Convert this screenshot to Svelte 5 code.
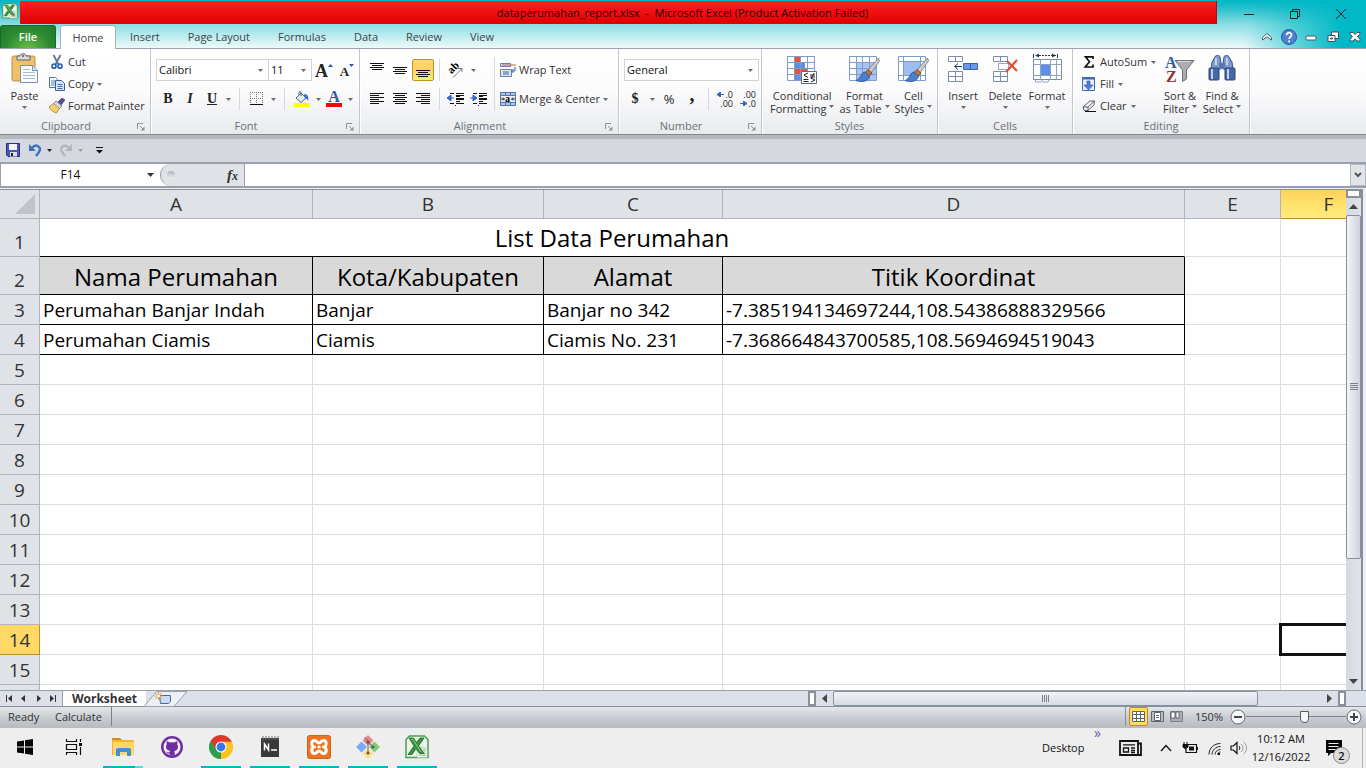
<script>
  const tabs = ['Insert', 'Page Layout', 'Formulas', 'Data', 'Review', 'View'];
  const columns = [
    { id: 'A', width: 273 },
    { id: 'B', width: 231 },
    { id: 'C', width: 179 },
    { id: 'D', width: 462 },
    { id: 'E', width: 96 },
    { id: 'F', width: 96 }
  ];
  const headings = ['Nama Perumahan', 'Kota/Kabupaten', 'Alamat', 'Titik Koordinat'];
  const records = [
    ['Perumahan Banjar Indah', 'Banjar', 'Banjar no 342', '-7.385194134697244,108.54386888329566'],
    ['Perumahan Ciamis', 'Ciamis', 'Ciamis No. 231', '-7.368664843700585,108.5694694519043']
  ];
  const emptyRows = [5, 6, 7, 8, 9, 10, 11, 12, 13, 14, 15, ''];
  let zoom = $state(59);
</script>

{#snippet arrow(color = '#6b6b6b')}
  <svg class="arrow" width="5" height="3" viewBox="0 0 5 3"><path d="M0 0h5L2.5 3z" fill={color} /></svg>
{/snippet}

{#snippet launcher(label)}
  <button class="launcher" aria-label={label}>
    <svg width="8" height="8" viewBox="0 0 8 8"><path d="M.5 6V.5H6M3 3l3 3" stroke="#8d939c" fill="none" /><path d="M7.5 3.5v4h-4z" fill="#8d939c" /></svg>
  </button>
{/snippet}

{#snippet lines(list)}
  <svg width="16" height="16" viewBox="0 0 16 16">
    {#each list as [x, y, w]}<rect {x} {y} width={w} height="1" fill="#111" />{/each}
  </svg>
{/snippet}

{#snippet brush()}
  <path d="M30.500 5L20 17l3 3 8.500-12z" fill="#c9ccd1" stroke="#777" stroke-width=".8" />
  <path d="M20 16.500l-3 3 4 4 3-3.500z" fill="#b5763f" stroke="#6b4020" stroke-width=".8" />
  <path d="M17 19c-4 0-4 7-9 8.500 5 2 12 1.500 13.500-4z" fill="#4a7fd0" stroke="#2c4f95" stroke-width=".8" />
{/snippet}

{#snippet excel(size)}
  <svg width={size} height={size} viewBox="0 0 24 24">
    <path d="M4.500 1h15l3.500 3.500V22.500H1V4.500z" fill="#e9f4e6" stroke="#4f9a5b" stroke-width="1.500" />
    <path d="M12 11l10 3v8.500H12z" fill="#fff" stroke="#a7cda6" stroke-width=".8" />
    <path d="M13 14l8 2M13 17l8 1.500M13 20l8 .500M16 12v9M19 13v9" stroke="#82b886" stroke-width=".8" />
    <path d="M4 3h4.500l3 4.500L15 3h4l-5.500 8 5.500 7.500h-4.500L11 13.500 7 19.500H3L9 11z" fill="#38923f" stroke="#1c6a2b" stroke-width=".8" />
    <path d="M6 4.500h2L16 17" stroke="#8fd07e" fill="none" />
  </svg>
{/snippet}

<div class="window">
  <header class="top">
    <div class="titlebar">
      <span class="appicon">{@render excel(16)}</span>
      <div class="title">dataperumahan_report.xlsx&nbsp; -&nbsp; Microsoft Excel (Product Activation Failed)</div>
      <div class="winctl">
        <button aria-label="Minimize"><svg width="12" height="12"><path d="M1 6.500h10" stroke="#222" /></svg></button>
        <button aria-label="Restore"><svg width="12" height="12"><path d="M1.500 3.500h7v7h-7zM3.500 3.500v-2h7v7h-2" stroke="#222" fill="none" /></svg></button>
        <button aria-label="Close"><svg width="12" height="12"><path d="M1 1l10 10M11 1L1 11" stroke="#222" /></svg></button>
      </div>
    </div>
    <nav class="tabs">
      <button class="file">File</button>
      <button class="home">Home</button>
      {#each tabs as tab}<button class="tab">{tab}</button>{/each}
      <div class="docctl">
        <button aria-label="Collapse ribbon"><svg width="12" height="12"><path d="M6 2.500L1.500 6.500V9L6 5.800 10.500 9V6.500z" fill="#fff" stroke="#4a5a62" /></svg></button>
        <button aria-label="Help"><svg width="16" height="16" viewBox="0 0 16 16"><circle cx="8" cy="8" r="7.500" fill="#4f80d2" stroke="#2a559f" /><path d="M5.500 6.200C5.500 2.800 10.600 3 10.500 6c0 1.700-2.400 2-2.400 4M8.100 11.500v1.700" stroke="#fff" stroke-width="1.700" fill="none" /></svg></button>
        <button aria-label="Minimize document"><svg width="12" height="12"><rect x="1" y="5" width="10" height="4" rx="1" fill="#fff" stroke="#4a5a62" /></svg></button>
        <button aria-label="Restore document"><svg width="12" height="12"><path d="M4.500 1h7v6.500h-7z" fill="#fff" stroke="#40525a" /><path d="M1 4.500h7v6H1z" fill="#fff" stroke="#40525a" /><path d="M3.500 7h2v1h-2z" fill="none" stroke="#40525a" /></svg></button>
        <button aria-label="Close document"><svg width="12" height="12"><path d="M1 1.500h3l2 2 2-2h3v1.500L8.500 5.500 11 8.500V10H8L6 8l-2 2H1V8.500l2.500-3L1 3z" fill="#fff" stroke="#40525a" /></svg></button>
      </div>
    </nav>
  </header>

  <section class="ribbon">
    <div class="group clip">
      <div class="body">
        <button class="big">
          <svg width="30" height="32" viewBox="0 0 30 32">
            <rect x="2" y="3" width="23" height="25" rx="2" fill="#efbf6b" stroke="#c08f42" />
            <path d="M7 3h3c0-3 6-3 6 0h4v4H7z" fill="#d8dbdf" stroke="#5f6670" /><circle cx="13" cy="3" r="1" fill="#555" />
            <path d="M10.500 12.500h12l5 5v12h-17z" fill="#fafcff" stroke="#7b8fae" /><path d="M22.500 12.500v5h5" fill="#dce5f2" stroke="#7b8fae" />
            <path d="M13 16.500h7M13 19.500h12M13 22.500h12M13 25.500h12" stroke="#a9b9d3" />
          </svg>
          <span>Paste</span>{@render arrow()}
        </button>
        <div class="stack">
          <button class="row"><svg width="16" height="16" viewBox="0 0 16 16"><path d="M4.500 1l4.800 9M11.500 1L6.700 10" stroke="#66768e" stroke-width="1.800" /><circle cx="5" cy="12.200" r="2" fill="none" stroke="#3162b4" stroke-width="1.700" /><circle cx="11" cy="12.200" r="2" fill="none" stroke="#3162b4" stroke-width="1.700" /></svg>Cut</button>
          <button class="row"><svg width="16" height="16" viewBox="0 0 16 16"><path d="M.5 1.500h6l2 2v8h-8z" fill="#f5f9ff" stroke="#54729f" /><path d="M2 5h5M2 7h5M2 9h5" stroke="#5f86c4" /><path d="M6.500 4.500h6l3 3v7h-9z" fill="#dbe8fa" stroke="#3a5f9e" /><path d="M8.500 8.500h5M8.500 10.500h5M8.500 12.500h5" stroke="#3f6cb8" /></svg>Copy {@render arrow()}</button>
          <button class="row"><svg width="16" height="16" viewBox="0 0 16 16"><path d="M13 0l3 2-4 5-3-3z" fill="#5a4a9a" stroke="#3a3070" stroke-width=".6" /><path d="M7 3l6 5-3 3-6-5z" fill="#d5d9df" stroke="#6c727b" stroke-width=".8" /><path d="M4.500 5.500l6 5-3 4.500c-3-.5-6-3-7.500-6z" fill="#f2cf70" stroke="#a5803a" stroke-width=".8" /></svg>Format Painter</button>
        </div>
      </div>
      <div class="label">Clipboard{@render launcher('Clipboard options')}</div>
    </div>

    <div class="group font">
      <div class="body cols">
        <div class="tools top-tools">
          <div class="combo name"><select aria-label="Font"><option>Calibri</option></select>{@render arrow()}</div>
          <div class="combo size"><select aria-label="Font size"><option>11</option></select>{@render arrow()}</div>
          <button class="ib grow" aria-label="Grow font"><b>A</b><svg width="5" height="3"><path d="M0 3h5L2.500 0z" fill="#2c55a8" /></svg></button>
          <button class="ib shrink" aria-label="Shrink font"><b>A</b><svg width="5" height="3"><path d="M0 0h5L2.500 3z" fill="#2c55a8" /></svg></button>
        </div>
        <div class="tools">
          <button class="ib serif" aria-label="Bold"><b>B</b></button>
          <button class="ib serif" aria-label="Italic"><b><i>I</i></b></button>
          <button class="ib serif" aria-label="Underline"><b><u>U</u></b></button>
          <button class="drop" aria-label="Underline styles">{@render arrow()}</button>
          <span class="sep wide"></span>
          <button class="ib" aria-label="Borders"><svg width="14" height="14"><path d="M.5 0v12M6.500 0v12M12.500 0v12M0 .5h13M0 6.500h13" stroke="#777" stroke-dasharray="1 1" /><path d="M0 12.500h13" stroke="#111" /></svg></button>
          <button class="drop" aria-label="Border styles">{@render arrow()}</button>
          <span class="sep wide"></span>
          <button class="ib" aria-label="Fill color"><svg width="16" height="16"><path d="M2 7l5-5 5 5-5 4.500z" fill="#dfe9f7" stroke="#4c6489" /><path d="M7 5V1.500C7 0 5 0 5 1.500V4" stroke="#4c6489" fill="none" /><path d="M10 3c4 0 5 3 4 7-1-2-2-3-4-4z" fill="#3f73c7" /><rect y="12" width="16" height="4" fill="#ff0" /></svg></button>
          <button class="drop" aria-label="Fill palette">{@render arrow()}</button>
          <button class="ib colorbtn" aria-label="Font color"><b>A</b></button>
          <button class="drop" aria-label="Font palette">{@render arrow()}</button>
        </div>
      </div>
      <div class="label">Font{@render launcher('Font options')}</div>
    </div>

    <div class="group align">
      <div class="body">
        <div class="cols">
          <div class="tools g1 top-tools">
            <button class="ib" aria-label="Top align">{@render lines([[1, 1, 14], [3, 3, 10], [1, 5, 14], [3, 7, 10]])}</button>
            <button class="ib" aria-label="Middle align">{@render lines([[1, 5, 14], [3, 7, 10], [1, 9, 14], [3, 11, 10]])}</button>
            <button class="ib on" aria-label="Bottom align">{@render lines([[1, 8, 14], [3, 10, 10], [1, 12, 14], [3, 14, 10]])}</button>
            <span class="sep"></span>
            <button class="ib" aria-label="Orientation"><svg class="open" width="16" height="16"><text x="1" y="10" transform="rotate(-45 5 8)" class="svgab">ab</text><path d="M5 15.500l9-9M10 6.500h4V10" stroke="#777" fill="none" /></svg></button>
            <button class="drop" aria-label="Orientation menu">{@render arrow()}</button>
          </div>
          <div class="tools g1">
            <button class="ib" aria-label="Align left">{@render lines([[1, 2, 14], [1, 4, 9], [1, 6, 14], [1, 8, 9], [1, 10, 14], [1, 12, 9]])}</button>
            <button class="ib" aria-label="Center">{@render lines([[1, 2, 14], [3, 4, 10], [1, 6, 14], [3, 8, 10], [1, 10, 14], [3, 12, 10]])}</button>
            <button class="ib" aria-label="Align right">{@render lines([[1, 2, 14], [6, 4, 9], [1, 6, 14], [6, 8, 9], [1, 10, 14], [6, 12, 9]])}</button>
            <span class="sep"></span>
            <button class="ib" aria-label="Decrease indent">{@render lines([[2, 2, 4], [8, 2, 8], [8, 4, 8], [8, 5, 4], [8, 7, 8], [8, 8, 8], [8, 10, 4], [2, 12, 4], [8, 12, 8], [7, 14, 1]])}<svg class="over" width="8" height="6"><path d="M0 3l4-3v6zM3 3h4" fill="#3565c0" stroke="#3565c0" /></svg></button>
            <button class="ib" aria-label="Increase indent">{@render lines([[2, 2, 4], [8, 2, 8], [8, 4, 8], [8, 5, 4], [8, 7, 8], [8, 8, 8], [8, 10, 4], [2, 12, 4], [8, 12, 8], [7, 14, 1]])}<svg class="over" width="8" height="6"><path d="M7 3L3 0v6zM0 3h4" fill="#3565c0" stroke="#3565c0" /></svg></button>
          </div>
        </div>
        <span class="sep tall"></span>
        <div class="cols">
          <button class="row tool-row top-tools"><svg width="16" height="16"><path d="M.5 1.500h10v3H.5zM.5 7.500h11v7H.5z" fill="#dce8f8" stroke="#6580ab" /><path d="M2 3h14" stroke="#b06a28" /><path d="M3 10h6M3 12h6" stroke="#3e5f98" /><path d="M15 5v4h-3M13.500 7l-2 2 2 2" stroke="#2f5cab" fill="none" /></svg>Wrap Text</button>
          <button class="row tool-row"><svg width="16" height="16"><path d="M.5 1.500h15v13H.5zM.5 4.500h15M.5 11.500h15M5.500 1v3M10.500 1v3M5.500 12v3M10.500 12v3" fill="#a9c5ed" stroke="#5776a9" /><path d="M1 5h14v6H1z" fill="#eef4fc" /><path d="M1 8h3M12 8h3M3 6.500L4.500 8 3 9.500M13 6.500L11.500 8 13 9.500" stroke="#222" fill="none" /><text x="5" y="11" class="svga">a</text></svg>Merge &amp; Center {@render arrow()}</button>
        </div>
      </div>
      <div class="label">Alignment{@render launcher('Alignment options')}</div>
    </div>

    <div class="group number">
      <div class="body cols">
        <div class="combo format top-tools"><select aria-label="Number format"><option>General</option></select>{@render arrow()}</div>
        <div class="tools g1">
          <button class="ib serif" aria-label="Currency"><b>$</b></button>
          <button class="drop" aria-label="Currency menu">{@render arrow()}</button>
          <button class="ib pct" aria-label="Percent">%</button>
          <button class="ib comma" aria-label="Comma style">,</button>
          <span class="sep"></span>
          <button class="ib dec" aria-label="Increase decimal"><span><svg width="8" height="5"><path d="M0 2.500L3.500 0v5zM3 2.500h4" fill="#3565c0" stroke="#3565c0" /></svg>.0</span><span>.00</span></button>
          <button class="ib dec" aria-label="Decrease decimal"><span>.00</span><span><svg width="8" height="5"><path d="M7 2.500L3.500 0v5zM0 2.500h4" fill="#3565c0" stroke="#3565c0" /></svg>.0</span></button>
        </div>
      </div>
      <div class="label">Number{@render launcher('Number options')}</div>
    </div>

    <div class="group styles">
      <div class="body">
        <button class="big">
          <svg width="32" height="32" viewBox="0 0 32 32">
            <path d="M1.500 3.500h27v24h-27z" fill="#fff" /><path d="M8 3h6v19H8z" fill="#e8503a" /><path d="M8 9h11v6H8z" fill="#5d8fe6" /><path d="M8 15h13v6H8z" fill="#e8503a" /><path d="M8 21h6v7H8z" fill="#5d8fe6" />
            <path d="M1.500 3.500h27v24h-27zM1 9.500h28M1 15.500h28M1 21.500h28M8.500 3v25M14.500 3v25M21.500 3v25" fill="none" stroke="#7f9bc8" />
            <path d="M15.500 18.500h15v12h-15z" fill="#fff" stroke="#566c90" /><path d="M22 20l-4 2 4 2.500M17.500 26.500h5M17.500 28.500h5M24 22h5M24 24h5M28 20l-3 6M25 25l4 2-4 2" stroke="#222" fill="none" />
          </svg>
          <span>Conditional</span><span>Formatting {@render arrow()}</span>
        </button>
        <button class="big">
          <svg width="32" height="32" viewBox="0 0 32 32"><path d="M1.500 3.500h27v24h-27z" fill="#fff" /><path d="M8 9h20v18H8z" fill="#a8c4f0" /><path d="M1.500 3.500h27v24h-27zM1 9.500h28M1 15.500h28M1 21.500h28M8.500 3v25M14.500 3v25M21.500 3v25" fill="none" stroke="#7f9bc8" />{@render brush()}</svg>
          <span>Format</span><span>as Table {@render arrow()}</span>
        </button>
        <button class="big">
          <svg width="32" height="32" viewBox="0 0 32 32"><path d="M1.500 3.500h27v24h-27z" fill="#fff" /><path d="M6 9h18v13H6z" fill="#9dbdf2" /><path d="M1.500 3.500h27v24h-27zM1 8.500h28M1 22.500h28M6.500 3v25M23.500 3v25" fill="none" stroke="#7f9bc8" />{@render brush()}</svg>
          <span>Cell</span><span>Styles {@render arrow()}</span>
        </button>
      </div>
      <div class="label">Styles</div>
    </div>

    <div class="group cells">
      <div class="body">
        <button class="big">
          <svg width="32" height="32" viewBox="0 0 32 32"><path d="M1.500 3.500h14v5h-14zM8.500 3v6M1.500 18.500h14v10h-14zM8.500 18v11M1 23.500h15" fill="#fff" stroke="#7c8dab" /><path d="M16.500 10.500h14v6h-14zM23.500 10v7" fill="#6a99ea" stroke="#3a62ad" /><path d="M8 13.500h7M11 10.500l-3.500 3 3.500 3" fill="none" stroke="#223a66" /></svg>
          <span>Insert</span>{@render arrow()}
        </button>
        <button class="big">
          <svg width="32" height="32" viewBox="0 0 32 32"><path d="M4.500 3.500h14v5h-14zM11.500 3v6M4.500 18.500h14v10h-14zM11.500 18v11M4 23.500h15" fill="#fff" stroke="#7c8dab" /><path d="M9.500 10.500h10v6h-10z" fill="none" stroke="#33538f" stroke-dasharray="1 1" /><path d="M18 8l10 10M28 7L17 19" stroke="#e8462c" stroke-width="2" /></svg>
          <span>Delete</span>{@render arrow()}
        </button>
        <button class="big">
          <svg width="32" height="32" viewBox="0 0 32 32"><path d="M2.500 6.500h28v20h-28z" fill="#fff" stroke="#7c8dab" /><path d="M2 11.500h29M2 22.500h29M9.500 6v21M19.500 6v21M25.500 6v21M4.500 27v2h6l1-2M12 29h5l1-2" fill="none" stroke="#8fa2c2" /><path d="M10 12h9v10h-9z" fill="#5d8fe6" /><path d="M2.500 1v4M26.500 1v4" stroke="#333" /><path d="M5 2.500h20" stroke="#333" stroke-dasharray="2 1" /><path d="M21 .500l4 2-4 2M8 .500L4 2.500l4 2" fill="#223a66" /></svg>
          <span>Format</span>{@render arrow()}
        </button>
      </div>
      <div class="label">Cells</div>
    </div>

    <div class="group editing">
      <div class="body">
        <div class="stack">
          <button class="row"><svg width="14" height="16"><path d="M11 5V2.800H3.500L7.500 7.800 3.200 13H11v-2.500" fill="none" stroke="#111" stroke-width="1.700" /></svg>AutoSum {@render arrow()}</button>
          <button class="row"><svg width="14" height="16"><path d="M.5 1.500h12v13H.5z" fill="#e8f0fc" stroke="#3f69b5" /><path d="M.5 1.500h12v2H.5z" fill="#3f69b5" /><path d="M5 5h3v4h3l-4.500 5L2 9h3z" fill="#4a80dc" stroke="#274f9d" stroke-width=".6" /></svg>Fill {@render arrow()}</button>
          <button class="row"><svg width="14" height="16"><path d="M1 9l7-6h4.500l-.5 4-6 5.500H2z" fill="#f6f0f4" stroke="#596476" /><path d="M1 9h5l6.500-6M6 9v3.500" fill="none" stroke="#596476" /><path d="M3 13.500h11" stroke="#111" /></svg>Clear {@render arrow()}</button>
        </div>
        <button class="big">
          <svg class="open" width="32" height="32" viewBox="0 0 32 32"><path d="M11 7.500h19L22.500 17v9l-4 2.500V17z" fill="#a9acb0" stroke="#6f7378" /><path d="M14 8.500h12" stroke="#ddd" /><text x="1" y="15" class="az blue">A</text><text x="2" y="29" class="az red">Z</text></svg>
          <span>Sort &amp;</span><span>Filter {@render arrow()}</span>
        </button>
        <button class="big">
          <svg width="32" height="32" viewBox="0 0 32 32"><path d="M9 4c0-2 5-2 5 0l1 6v6H5l1-7zM18 4c0-2 5-2 5 0l3 5 1 7H17v-6z" fill="#7f9bcb" stroke="#38528a" /><path d="M13 10h6v6h-6z" fill="#5a78ae" /><rect x="3" y="15" width="10" height="12" rx="1" fill="#4468a8" stroke="#2a4578" /><rect x="19" y="15" width="10" height="12" rx="1" fill="#4468a8" stroke="#2a4578" /><path d="M6 16v10M22 16v10M10 5v7M21 5v7" stroke="#c3d2ee" stroke-width="2" /></svg>
          <span>Find &amp;</span><span>Select {@render arrow()}</span>
        </button>
      </div>
      <div class="label">Editing</div>
    </div>
  </section>

  <div class="qat">
    <button aria-label="Save"><svg width="14" height="14"><path d="M.5.5h13v13H2l-1.500-1.500z" fill="#4b52b8" stroke="#2b2f85" /><path d="M3 1h8v6H3z" fill="#f2f5fb" /><path d="M4 9h7v4.500H4z" fill="#d9dce6" /><path d="M5 10h2v3H5z" fill="#222" /></svg></button>
    <button class="undo" aria-label="Undo"><svg width="14" height="14"><path d="M4 5c4-5 10-1 7 4l-3 4" fill="none" stroke="#3b72c6" stroke-width="2.400" /><path d="M1 1v7h7z" fill="#3b72c6" /></svg></button>
    <button class="drop" aria-label="Undo history">{@render arrow('#222')}</button>
    <button class="undo" aria-label="Redo"><svg width="14" height="14"><path d="M10 5C6 0 0 4 3 9l3 4" fill="none" stroke="#b1b5bb" stroke-width="2.200" /><path d="M13 1v7H6z" fill="#b1b5bb" /></svg></button>
    <button class="drop" aria-label="Redo history">{@render arrow('#9a9fa6')}</button>
    <button class="more" aria-label="Customize"><svg width="7" height="7"><path d="M0 .5h7" stroke="#111" /><path d="M0 3h7L3.500 6.500z" fill="#111" /></svg></button>
  </div>

  <div class="formula">
    <div class="namebox"><input aria-label="Name box" value="F14" /><button aria-label="Names"><svg width="7" height="4"><path d="M0 0h7L3.500 4z" fill="#333" /></svg></button></div>
    <div class="fx"><span class="knob"></span><button aria-label="Insert function"><i>f<small>x</small></i></button></div>
    <input class="entry" aria-label="Formula" />
    <button class="expand" aria-label="Expand formula bar"><svg width="8" height="6"><path d="M1 1l3 3 3-3" fill="none" stroke="#555" stroke-width="2" /></svg></button>
  </div>

  <main class="sheet">
    <div class="gridwrap">
      <table>
        <colgroup><col style="width:40px" />{#each columns as c}<col style="width:{c.width}px" />{/each}</colgroup>
        <thead>
          <tr>
            <th class="corner" aria-label="Select all"><svg width="20" height="20"><path d="M20 0v20H0z" fill="#bfc4ca" /></svg></th>
            {#each columns as c}<th class:sel={c.id === 'F'}>{c.id}</th>{/each}
          </tr>
        </thead>
        <tbody>
          <tr class="high"><th>1</th><td colspan="4" class="caption">List Data Perumahan</td><td></td><td></td></tr>
          <tr class="high"><th>2</th>{#each headings as h}<td class="head">{h}</td>{/each}<td></td><td></td></tr>
          {#each records as record, i}
            <tr><th>{i + 3}</th>{#each record as value}<td class="data">{value}</td>{/each}<td></td><td></td></tr>
          {/each}
          {#each emptyRows as n}
            <tr><th class:sel={n === 14}>{n}</th>{#each columns as c}<td class:active={n === 14 && c.id === 'F'}></td>{/each}</tr>
          {/each}
        </tbody>
      </table>
    </div>
    <div class="vscroll">
      <span class="split"></span>
      <button aria-label="Scroll up"><svg width="9" height="5"><path d="M0 5h9L4.500 0z" fill="#444" /></svg></button>
      <div class="vtrack"><div class="vthumb"><svg width="8" height="7"><path d="M0 .5h8M0 2.500h8M0 4.500h8M0 6.500h8" stroke="#7d838c" /></svg></div></div>
      <button aria-label="Scroll down"><svg width="9" height="5"><path d="M0 0h9L4.500 5z" fill="#444" /></svg></button>
    </div>
  </main>

  <div class="sheetbar">
    <div class="nav">
      <button aria-label="First sheet"><svg width="7" height="7"><path d="M.5 0v7" stroke="#333" /><path d="M6 0v7L2 3.500z" fill="#333" /></svg></button>
      <button aria-label="Previous sheet"><svg width="7" height="7"><path d="M5 0v7L1 3.500z" fill="#333" /></svg></button>
      <button aria-label="Next sheet"><svg width="7" height="7"><path d="M2 0v7l4-3.500z" fill="#333" /></svg></button>
      <button aria-label="Last sheet"><svg width="7" height="7"><path d="M6.500 0v7" stroke="#333" /><path d="M1 0v7l4-3.500z" fill="#333" /></svg></button>
    </div>
    <button class="worksheet">Worksheet</button>
    <button class="newsheet" aria-label="New sheet"><svg width="44" height="16"><path d="M0 15.500L12.500 .5H43L30 15.500z" fill="#eceff4" stroke="#9aa1ab" /><path d="M15.500 4.500h11v6l-2 2h-8z" fill="#c9daf4" stroke="#4c689b" /><path d="M14.500 1v8M10.500 5h8M11.500 2l6 6M17.500 2l-6 6" stroke="#e8912a" /><circle cx="14.500" cy="5" r="1.500" fill="#fff" /></svg></button>
    <div class="hscroll">
      <span class="hsplit"></span>
      <button aria-label="Scroll left"><svg width="5" height="9"><path d="M5 0v9L0 4.500z" fill="#444" /></svg></button>
      <div class="htrack"><div class="hthumb"><svg width="7" height="7"><path d="M.5 0v7M2.500 0v7M4.500 0v7M6.500 0v7" stroke="#7d838c" /></svg></div></div>
      <button aria-label="Scroll right"><svg width="5" height="9"><path d="M0 0v9l5-4.500z" fill="#444" /></svg></button>
      <span class="hsplit"></span>
    </div>
    <span class="endcap"></span>
  </div>

  <footer class="status">
    <span class="ready">Ready</span><span class="calc">Calculate</span>
    <div class="views">
      <button class="on" aria-label="Normal view"><svg width="13" height="11"><path d="M.5.5h12v10H.5zM0 3.500h13M0 7.500h13M4.500 0v11M8.500 0v11" fill="#fff" stroke="#5d6570" /></svg></button>
      <button aria-label="Page layout view"><svg width="13" height="11"><path d="M.5.5h12v10H.5z" fill="#b9bec5" stroke="#5d6570" /><path d="M3.500 1.500h6v8h-6z" fill="#fff" stroke="#5d6570" /><path d="M5 4.500h3M5 6.500h3" stroke="#5d6570" /></svg></button>
      <button aria-label="Page break view"><svg width="13" height="11"><path d="M.5.5h12v10H.5z" fill="#a7acb3" stroke="#7a808a" /><path d="M1 1h4v6H1zM6 1h3v6H6z" fill="#fff" stroke="#5d6570" /></svg></button>
    </div>
    <span class="pct-label">150%</span>
    <button class="round" aria-label="Zoom out"><svg width="16" height="16"><circle cx="8" cy="8" r="7" fill="#f6f7f9" stroke="#636a74" /><path d="M4 8h8" stroke="#444" stroke-width="2" /></svg></button>
    <input type="range" aria-label="Zoom" min="0" max="100" bind:value={zoom} />
    <button class="round" aria-label="Zoom in"><svg width="16" height="16"><circle cx="8" cy="8" r="7" fill="#f6f7f9" stroke="#636a74" /><path d="M4 8h8M8 4v8" stroke="#444" stroke-width="2" /></svg></button>
  </footer>

  <div class="taskbar">
    <button aria-label="Start"><svg width="16" height="16"><path d="M0 2.500L7 1.500v6H0zM8 1.300L16 0v7.500H8zM0 8.500h7v6l-7-1zM8 8.500h8V16l-8-1.300z" fill="#050505" /></svg></button>
    <button aria-label="Task view"><svg width="18" height="16"><path d="M1.500 0v2.500h10V0M1.500 5.500h10v5h-10zM1.500 16v-2.500h10V16M15.500 0v3M15.500 8v8" fill="none" stroke="#111" stroke-width="1.200" /><path d="M14 4h3v3h-3z" fill="#111" /></svg></button>
    <button class="run many" aria-label="File Explorer"><svg width="22" height="20"><path d="M0 1h8l2 2h12v15H0z" fill="#f5b52c" /><path d="M1 5h21v13H1z" fill="#ffd767" /><path d="M0 3V1h8l2 2z" fill="#d58e12" /><path d="M4 19v-7l2-1h11l2 1v7h-4v-4H8v4z" fill="#3d93d6" /></svg></button>
    <button aria-label="GitHub Desktop"><svg width="22" height="22" viewBox="0 0 22 22"><circle cx="11" cy="11" r="11" fill="#6e2ea0" /><circle cx="11" cy="11" r="8.500" fill="#f3eef7" /><path d="M6 5l3 1.500a8 8 0 0 1 4 0L16 5c.5 1.200.5 2.300.2 3.200 1.300 2 1 4.700-.7 6-.7.500-1.500.8-2.300 1 .6.600.5 1.600.5 4.300h-5v-2c-2 .3-2.500-.5-3.500-2 1-.2 1.700 1.300 3.500.8 0-.6.200-1 .5-1.300C6.200 14.200 5 13 5 11c0-1 .2-2 .8-2.800C5.500 7.300 5.500 6.200 6 5z" fill="#6e2ea0" /></svg></button>
    <button class="run" aria-label="Chrome"><svg width="24" height="24" viewBox="0 0 24 24"><path d="M12 12L1.600 6A12 12 0 0 1 22.400 6z" fill="#e2382c" /><path d="M12 12L22.400 6A12 12 0 0 1 12 24z" fill="#fcc31e" /><path d="M12 12L12 24A12 12 0 0 1 1.600 6z" fill="#2d9e4b" /><path d="M12 6.500h10.600l-5.600 8.500L12 24z" fill="#fcc31e" /><path d="M1.700 6L7.200 15l4.800 2.500L10 24z" fill="#2d9e4b" /><path d="M12 6.500h10.700V6L12 4 1.600 6l5.600 8.500z" fill="#e2382c" /><path d="M1.600 6l5.600 9 3 3-3 2z" fill="#2d9e4b" /><circle cx="12" cy="12" r="5.500" fill="#fff" /><circle cx="12" cy="12" r="4.400" fill="#3377e8" /></svg></button>
    <button class="run" aria-label="Notepad"><svg width="20" height="24"><path d="M1 3h18v19H1z" fill="#393939" /><path d="M3 1v4M6 1v4M9 1v4M12 1v4M15 1v4M18 1v4" stroke="#777" /><path d="M4.500 15.500V9l4 6V8.500M11 15h6" fill="none" stroke="#fff" stroke-width="1.500" /></svg></button>
    <button class="run" aria-label="XAMPP"><svg width="24" height="24"><rect x=".5" y=".5" width="23" height="23" rx="2" fill="#ef7422" stroke="#d95f14" /><path d="M7.500 5.500c3 0 2 2.500 4.500 2.500s1.500-2.500 4.500-2.500 3.500 4 1.500 6.500c2 2.500 1.500 6.500-1.500 6.500s-2-2.500-4.500-2.500-1.500 2.500-4.500 2.500S4 14.500 6 12C4 9.500 4.500 5.500 7.500 5.500z" fill="#ef7422" stroke="#fff" stroke-width="3" /><path d="M6 12h3M15 12h3M10.500 12h3" fill="none" stroke="#fff" stroke-width="2.500" /></svg></button>
    <button class="run" aria-label="Git"><svg width="24" height="24"><path d="M12 0l5.500 5.500L12 11 6.500 5.500z" fill="#ef8587" /><path d="M5.500 6.500L11 12l-5.500 5.500L0 12z" fill="#79aaf5" /><path d="M18.500 6.500L24 12l-5.500 5.500L13 12z" fill="#7fce75" /><path d="M12 13l5.500 5.500L12 24l-5.500-5.500z" fill="#fae27c" /><path d="M8.500 2.500L12 6v12M12 7l5 5" stroke="#8a7a78" stroke-width="1.200" fill="none" /><circle cx="12" cy="7" r="1.500" fill="#555" /><circle cx="17" cy="12" r="1.500" fill="#555" /><circle cx="12" cy="18" r="1.500" fill="#555" /></svg></button>
    <button class="run" aria-label="Excel">{@render excel(24)}</button>

    <div class="tray">
      <span class="desktop">Desktop</span><span class="chev">»</span>
      <button class="t1" aria-label="News"><svg width="24" height="16"><path d="M2 1h18v14H2zM20 3.500h3V15H3" fill="none" stroke="#111" stroke-width="1.800" /><path d="M5 4.800h12M13 8h4M13 10.500h4M13 12.500h4" stroke="#111" stroke-width="1.300" /><path d="M5.500 8h5v4h-5z" fill="none" stroke="#111" stroke-width="1.300" /></svg></button>
      <button class="t2" aria-label="Hidden icons"><svg width="12" height="8"><path d="M1 7l5-5.500L11 7" fill="none" stroke="#111" stroke-width="1.300" /></svg></button>
      <button class="t2" aria-label="Battery"><svg width="16" height="12"><path d="M6 2.500h8.500v8H4V7" fill="none" stroke="#111" stroke-width="1.200" /><path d="M7 4.500h5v4H7zM15 5h1v3h-1z" fill="#111" /><path d="M1 2.500h5V5L3.500 7 1 5zM2 0v2M5 0v2" fill="#111" stroke="#111" /></svg></button>
      <button class="t2" aria-label="Network"><svg width="13" height="13"><path d="M1 12.500C1 6 6 1.500 12.500 1.500M4 12.500C4 8 8 4.500 12.500 4.500M7 12.500c0-3 2.500-5 5.500-5M9.500 12.500c0-1.500 1.500-2.500 3-2.500" fill="none" stroke="#222" /><path d="M10 11h2v2h-2z" fill="#111" /></svg></button>
      <button class="t2" aria-label="Volume"><svg width="17" height="14"><path d="M1 5h2.500L7 1.500v11L3.500 9H1z" fill="none" stroke="#111" stroke-width="1.200" /><path d="M9 5c1 1 1 3 0 4" fill="none" stroke="#222" /><path d="M11 3c2.500 2 2.500 6 0 8M13.500 1c4 3 4 9 0 12" fill="none" stroke="#999" /></svg></button>
      <div class="clock"><span>10:12 AM</span><span>12/16/2022</span></div>
      <button class="notify" aria-label="Notifications"><svg width="18" height="16"><path d="M1 0h16v13H6l-3 3v-3H1z" fill="#080808" /><path d="M3.500 3.500h10M3.500 6.500h10M3.500 9.500h7" stroke="#eee" /></svg><span class="badge">2</span></button>
      <span class="peek"></span>
    </div>
  </div>
</div>

<style>
  :global(body) { margin: 0; }
  * { box-sizing: border-box; }
  .window { display: flex; flex-direction: column; height: 100vh; overflow: hidden; font: 11px/14px "Open Sans", "Noto Sans", sans-serif; color: #333; background: #d5d9df; }
  button { border: 0; padding: 0; margin: 0; background: none; font: inherit; color: inherit; display: flex; align-items: center; justify-content: center; }
  svg { flex: none; display: block; }
  svg.open { overflow: visible; }
  select, input { font: inherit; border: 0; margin: 0; padding: 0; background: none; color: #111; border-radius: 0; outline: 0; }

  .top { flex: none; border-bottom: 1px solid #9aa3ac; background: linear-gradient(100deg, transparent 91%, #00b8c6 98%), linear-gradient(#00b7c5 0, #25c0cc 8px, #8fdfe4 25px, #eefafa 48px); }
  .titlebar { display: flex; height: 25px; }
  .appicon { width: 20px; padding: 3px 0 0 2px; }
  .title { flex: 1; margin: 1px 0; padding-left: 129px; display: flex; align-items: center; justify-content: center; background: linear-gradient(#fd2020, #df0000); color: #2b0000; border-right: 1px solid #b50a12; white-space: nowrap; }
  .winctl { width: 149px; padding: 3px 2px 0 9px; display: flex; }
  .winctl button { width: 46px; }
  .tabs { display: flex; height: 23px; color: #404448; }
  .file { width: 56px; margin-right: 4px; color: #fff; font-weight: 600; border: 1px solid #1b6a2a; border-bottom: 0; border-radius: 3px 3px 0 0; background: radial-gradient(ellipse at 50% 110%, #6cc04a, #2a8a31 60%, #1f7a2d); }
  .home { width: 56px; height: 24px; background: #fff; border: 1px solid #a9b3bb; border-bottom: 0; border-radius: 3px 3px 0 0; }
  .tab { padding: 0 14px; }
  .docctl { margin-left: auto; display: flex; }
  .docctl button { width: 22px; }

  .ribbon { flex: none; display: flex; height: 86px; background: linear-gradient(#fff, #fbfbfc 50%, #e8eaed); border-bottom: 1px solid #83888f; }
  .group { flex: none; display: flex; flex-direction: column; border-right: 1px solid #c3c7cd; box-shadow: 1px 0 #fff; }
  .body { display: flex; height: 69px; }
  .label { position: relative; text-align: center; color: #6a7078; line-height: 16px; padding-right: 18px; }
  .styles .label, .cells .label, .editing .label { padding-right: 0; }
  .launcher { position: absolute; right: 5px; top: 5px; }
  .clip { width: 151px; } .font { width: 209px; } .align { width: 259px; } .number { width: 143px; }
  .styles { width: 176px; } .cells { width: 135px; } .editing { width: 177px; }
  .big { flex-direction: column; justify-content: flex-start; padding-top: 4px; line-height: 13px; white-space: nowrap; }
  .big svg:first-child { margin-bottom: 4px; }
  .big > .arrow { margin-top: 4px; }
  .big span { display: flex; align-items: center; gap: 3px; }
  .clip .big { width: 49px; }
  .stack { display: flex; flex-direction: column; padding-top: 2px; }
  .row { height: 22px; gap: 4px; justify-content: flex-start; white-space: nowrap; }
  .clip .row { gap: 3px; }
  .cols { display: flex; flex-direction: column; }
  .top-tools { margin: 10px 0 7px; }
  .tools { display: flex; height: 22px; padding-left: 6px; }
  .g1 { gap: 1px; }
  .number .tools { padding-left: 5px; }
  .ib { width: 22px; height: 22px; position: relative; color: #222; }
  .ib.on { border: 1px solid #c0902e; border-radius: 2px; background: linear-gradient(#fcd873, #ffd25a 50%, #fee989); }
  .over { position: absolute; left: 2px; top: 7px; }
  .drop { width: 10px; }
  .sep { width: 9px; background: linear-gradient(#d5d8dd, #d5d8dd) 50% / 1px 100% no-repeat; }
  .sep.wide { width: 13px; }
  .sep.tall { height: 54px; margin-top: 8px; }
  .serif { font: 14px/16px "Liberation Serif", serif; }
  .combo { display: flex; align-items: center; height: 22px; border: 1px solid #cfd3d9; background: #fff; position: relative; }
  .combo select { appearance: none; width: 100%; height: 100%; padding-left: 2px; }
  .combo .arrow { position: absolute; right: 5px; }
  .combo.name { width: 113px; margin-left: -1px; }
  .combo.size { width: 44px; margin-left: -1px; }
  .combo.format { width: 135px; margin-left: 5px; }
  .grow, .shrink { align-items: flex-start; font-family: "Liberation Serif", serif; }
  .grow { font-size: 18px; line-height: 24px; width: 24px; }
  .shrink { font-size: 13px; line-height: 26px; }
  .grow svg, .shrink svg { margin-top: 5px; }
  .colorbtn { font: 16px/14px "Liberation Serif", serif; color: #2f5597; }
  .colorbtn b { width: 16px; height: 16px; border-bottom: 4px solid #f00; line-height: 12px; }
  .svgab { font: bold 11px "Liberation Serif", serif; }
  .svga { font: bold 10px "Liberation Serif", serif; }
  .az { font: bold 16px "Liberation Serif", serif; }
  .blue { fill: #2f5aa0; } .red { fill: #9b3030; }
  .pct { font-size: 13px; }
  .comma { font: bold 20px/12px "Liberation Serif", serif; align-items: flex-start; }
  .dec { flex-direction: column; align-items: flex-end; font-size: 9px; line-height: 9px; padding-right: 3px; }
  .dec span { display: flex; align-items: center; }
  .tool-row { padding-left: 1px; gap: 3px; }
  .styles .body { padding-left: 8px; gap: 5px; }
  .cells .body { padding-left: 4px; }
  .cells .big { width: 42px; }
  .editing .stack { width: 86px; padding-left: 9px; }
  .editing .row { gap: 4px; }
  .editing .big { width: 42px; }

  .qat { flex: none; display: flex; height: 29px; padding: 1px 0 2px 6px; border-top: 4px solid #b4b8bf; border-bottom: 2px solid #98a1ad; background: #d5d9df; }
  .qat button { width: 14px; }
  .qat .undo { margin-left: 8px; }
  .qat .undo + .drop + .undo { margin-left: 3px; }
  .qat .more { margin-left: 5px; }

  .formula { flex: none; display: flex; height: 24px; border-bottom: 2px solid #9aa0aa; background: #fff; }
  .namebox { display: flex; width: 160px; border-left: 1px solid #9aa0aa; }
  .namebox input { flex: 1; min-width: 0; text-align: center; font-size: 12px; }
  .namebox button { width: 20px; }
  .fx { display: flex; align-items: center; justify-content: space-between; width: 85px; padding: 0 6px; background: #dfe2e7; border: 1px solid #9aa0aa; border-width: 0 1px 0 1px; border-radius: 11px 0 0 11px; }
  .knob { width: 8px; height: 8px; border-radius: 50%; background: linear-gradient(#aeb3ba, #eff1f4); }
  .fx button { font: bold 15px/20px "Liberation Serif", serif; }
  .fx small { font-size: 12px; }
  .entry { flex: 1; min-width: 0; }
  .expand { width: 16px; background: #e1e4e9; border: 1px solid #b5bac2; }

  .sheet { flex: 1; min-height: 0; display: flex; background: #dfe2e8; border-top: 1px solid #eceef3; }
  .gridwrap { flex: 1; min-width: 0; overflow: hidden; background: #fff; border-top: 1px solid #8c929b; }
  table { table-layout: fixed; width: 1377px; border-collapse: separate; border-spacing: 0; font: 19px/24px "Open Sans", "Noto Sans", sans-serif; color: #000; }
  th { height: 30px; padding: 0; font-weight: 400; text-align: center; vertical-align: bottom; color: #333; background: #dfe2e7; border-right: 1px solid #b0b5bc; border-bottom: 1px solid #b0b5bc; line-height: 28px; }
  thead th { height: 29px; line-height: 28px; }
  th.corner svg { margin: 0 0 4px 15px; }
  th.corner { line-height: 0; }
  thead th.sel { background: linear-gradient(#fed25c, #ffee78); border-bottom-color: #c7882a; }
  tbody th.sel { background: #ffd966; border-color: #c7882a; }
  td { height: 30px; padding: 0 3px; border-right: 1px solid #dadcdd; border-bottom: 1px solid #dadcdd; white-space: nowrap; }
  .high td { height: 38px; text-align: center; font-size: 24px; line-height: 30px; }
  td.caption { border-bottom-color: #000; }
  td.head { background: #d9d9d9; border-color: #000; padding-top: 3px; }
  td.data { border-color: #000; }
  td.active { position: relative; }
  td.active::after { content: ""; position: absolute; inset: -2px; border: 3px solid #111; }

  .vscroll { width: 20px; display: flex; flex-direction: column; background: linear-gradient(90deg, #d5d9e0, #e0e4ea 15px, #868f9b 15px, #868f9b 17px, #eceff5 17px); }
  .vscroll button { width: 15px; height: 17px; }
  .split { width: 15px; height: 9px; border: 2px solid #8b8f96; background: #fff; }
  .vtrack { flex: 1; }
  .vthumb { height: 75%; width: 15px; border: 1px solid #8790a0; border-radius: 2px; display: flex; align-items: center; justify-content: center; background: linear-gradient(90deg, #f2f4f8, #d0d3de); }

  .sheetbar { flex: none; display: flex; height: 17px; border-top: 1px solid #9aa0aa; border-bottom: 1px solid #868f9b; background: #dce0e8; }
  .nav { display: flex; width: 63px; padding: 0 2px; border-right: 1px solid #9aa0aa; }
  .nav button { flex: 1; }
  .worksheet { width: 83px; font-weight: 700; font-size: 12px; background: #fff; }
  .newsheet { width: 44px; margin-left: -2px; }
  .hscroll { width: calc(40% - 8px); margin-left: auto; display: flex; }
  .hsplit { width: 8px; border: 2px solid #8b8f96; background: #fff; }
  .hscroll button { width: 17px; }
  .htrack { flex: 1; display: flex; }
  .hthumb { width: 87%; border: 1px solid #8790a0; border-radius: 2px; display: flex; align-items: center; justify-content: center; background: linear-gradient(#f2f4f8, #d5d9e2); }
  .endcap { width: 20px; }

  .status { flex: none; display: flex; align-items: center; height: 21px; padding: 0 4px 2px 8px; background: linear-gradient(#e4e7ea, #c9cdd2 50%, #b7bbc0); }
  .ready { width: 47px; }
  .calc { border-right: 1px solid #7c828b; line-height: 19px; padding-right: 9px; }
  .views { margin-left: auto; display: flex; border-left: 1px solid #8b9098; padding-left: 3px; }
  .views button { width: 19px; height: 19px; }
  .views .on { border: 1px solid #c28a1e; border-radius: 2px; background: #ffdc62; }
  .pct-label { width: 44px; text-align: center; padding-left: 2px; }
  input[type="range"] { appearance: none; width: 100px; height: 15px; background: linear-gradient(#7d848e, #7d848e) 50% / 100% 1px no-repeat; }
  input[type="range"]::-webkit-slider-thumb { appearance: none; width: 9px; height: 12px; border: 1px solid #555c66; border-radius: 1px 1px 5px 5px; background: #f5f7f9; }

  .taskbar { flex: none; display: flex; height: 40px; background: #eee; color: #111; }
  .taskbar > button { width: 49px; border-bottom: 2px solid transparent; }
  .taskbar > .run { background: linear-gradient(#00b7c3, #00b7c3) 5px 100% / 40px 2px no-repeat; background-origin: border-box; background-clip: border-box; }
  .taskbar > .many { background-image: linear-gradient(90deg, #00b7c3 32px, #6cd3da 32px); }
  .tray { margin-left: auto; display: flex; align-items: center; }
  .desktop { width: 52px; }
  .chev { width: 24px; align-self: flex-start; color: #6260b0; font-size: 14px; line-height: 10px; }
  .t1 { width: 36px; justify-content: flex-start; }
  .t2 { width: 24px; }
  .clock { display: flex; flex-direction: column; align-items: center; width: 62px; line-height: 18px; }
  .notify { position: relative; width: 44px; height: 30px; }
  .badge { position: absolute; right: 6px; bottom: -1px; width: 17px; height: 17px; border: 1px solid #888; border-radius: 50%; background: #ddd; font-weight: 600; line-height: 15px; }
  .peek { width: 4px; height: 40px; margin-left: 6px; border-left: 1px solid #b5b5b5; }
</style>
